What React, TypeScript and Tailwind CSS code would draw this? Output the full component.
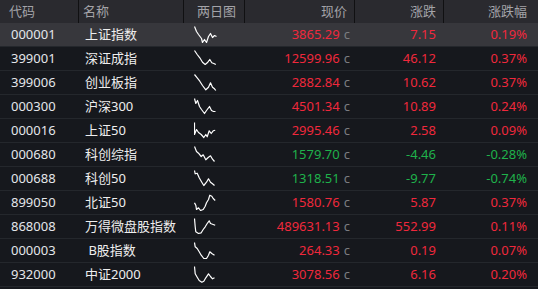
import React from "react";

type Row = {
  code: string;
  name: string;
  price: string;
  chg: string;
  pct: string;
  spark: string;
};

const rows: Row[] = [
  { code: "000001", name: "上证指数", price: "3865.29", chg: "7.15", pct: "0.19%", spark: "0,0 2,5 4,8 7,12 8,16 10,13 12,16 14,10 16,7 18,11 20,9 22,10" },
  { code: "399001", name: "深证成指", price: "12599.96", chg: "46.12", pct: "0.37%", spark: "0,0 2.7,4 5.3,7.3 8,11.7 10.7,14 13.3,11.7 15.3,9 17.3,12.3 19.3,13 21.3,14" },
  { code: "399006", name: "创业板指", price: "2882.84", chg: "10.62", pct: "0.37%", spark: "0,0 2.7,3.3 5.3,6.7 8,11 11.3,15.3 14,12.7 16,8.3 18,12.7 20,14.3 21.3,16" },
  { code: "000300", name: "沪深300", price: "4501.34", chg: "10.89", pct: "0.24%", spark: "0,0 1.3,5 3,2 5,8 7,11 10,15 12,12 15,8 17,12 19,13 21,13" },
  { code: "000016", name: "上证50", price: "2995.46", chg: "2.58", pct: "0.09%", spark: "0,0 0,12 2,7 4,10 6.7,12 9.3,15 11.3,12 12.7,14.3 14.7,8.3 16.7,11 18.7,8.3 20.7,7.7" },
  { code: "000680", name: "科创综指", price: "1579.70", chg: "-4.46", pct: "-0.28%", spark: "0,0 2,5 4,6.7 6.7,10 8.7,8.3 11.3,13.3 14,10.7 16,9.3 18,12.7 20,15" },
  { code: "000688", name: "科创50", price: "1318.51", chg: "-9.77", pct: "-0.74%", spark: "0,0 0.7,3.3 2.7,2.7 4.7,7.3 7.3,11.7 9.3,15 12,11.7 14,8.3 16,11.7 18,13.3 20,15" },
  { code: "899050", name: "北证50", price: "1580.76", chg: "5.87", pct: "0.37%", spark: "0,8.3 1.3,10.7 2,15 4,13.3 6,16 8.7,15 10.7,11.7 12,8.3 14,5 15.3,0.7 17.3,1.7 18.7,4 20.7,6" },
  { code: "868008", name: "万得微盘股指数", price: "489631.13", chg: "552.99", pct: "0.11%", spark: "0,0 0.7,8.3 1.3,13.3 4,15 6.7,14.3 8.7,11 10.7,8.3 12.7,5 14.7,2.3 16,5 18,5.7 20.7,6.7" },
  { code: "000003", name: " B股指数", price: "264.33", chg: "0.19", pct: "0.07%", spark: "0,0 0.7,4.3 2.7,6 4.7,9.3 6.7,12.7 9.3,16 12,16 14,12.7 15.3,9.3 17.3,11 20,12.7" },
  { code: "932000", name: "中证2000", price: "3078.56", chg: "6.16", pct: "0.20%", spark: "0,0 0.7,7.3 2.7,10.7 4.7,14 7.3,15.7 9.3,14.7 11.3,11.3 14,7.3 16,10 18,12.3 20,11.3" },
];

const cols = "grid grid-cols-[79px_105px_61px_110px_89px_94px]";

export default function App() {
  return (
    <div
      className="h-[289px] w-[538px] overflow-hidden bg-[#16181d] text-[13px]"
      style={{ fontFamily: '"Noto Sans", "Noto Sans CJK SC", sans-serif' }}
    >
      <div className={`${cols} h-[23px] items-center bg-[#2a2a2f] text-[#a3a3a8]`}>
        <div className="flex h-full items-center border-r border-[#101012] pl-[9px]">代码</div>
        <div className="flex h-full items-center border-r border-[#101012] pl-[4px]">名称</div>
        <div className="flex h-full items-center border-r border-[#101012] pl-[13px]">两日图</div>
        <div className="flex h-full items-center justify-end border-r border-[#101012] pr-[7px]">现价</div>
        <div className="flex h-full items-center justify-end border-r border-[#101012] pr-[7px]">涨跌</div>
        <div className="flex h-full items-center justify-end pr-[11px]">涨跌幅</div>
      </div>
      {rows.map((r, i) => {
        const up = !r.chg.startsWith("-");
        const color = up ? "text-[#f0283c]" : "text-[#1fb24b]";
        return (
          <div
            key={r.code}
            className={`${cols} h-[24px] items-center border-b border-[#24272c] ${
              i === 0 ? "bg-[#37373c]" : ""
            }`}
          >
            <div className="pl-[11px] text-[#e4e6ea]">{r.code}</div>
            <div className="whitespace-pre pl-[6px] text-[#eeeeee]">{r.name}</div>
            <div className="flex h-full items-center pl-[10px]">
              <svg width="23" height="17" viewBox="-0.5 -0.5 23 17" className="block">
                <polyline points={r.spark} fill="none" stroke="#ffffff" strokeWidth="1.2" strokeLinejoin="round" />
              </svg>
            </div>
            <div className={`flex items-baseline justify-end pr-[5px] ${color}`}>
              {r.price}
              <span className="ml-[4px] text-[#7b7d80]">c</span>
            </div>
            <div className={`pr-[8px] text-right ${color}`}>{r.chg}</div>
            <div className={`pr-[11px] text-right ${color}`}>{r.pct}</div>
          </div>
        );
      })}
    </div>
  );
}
